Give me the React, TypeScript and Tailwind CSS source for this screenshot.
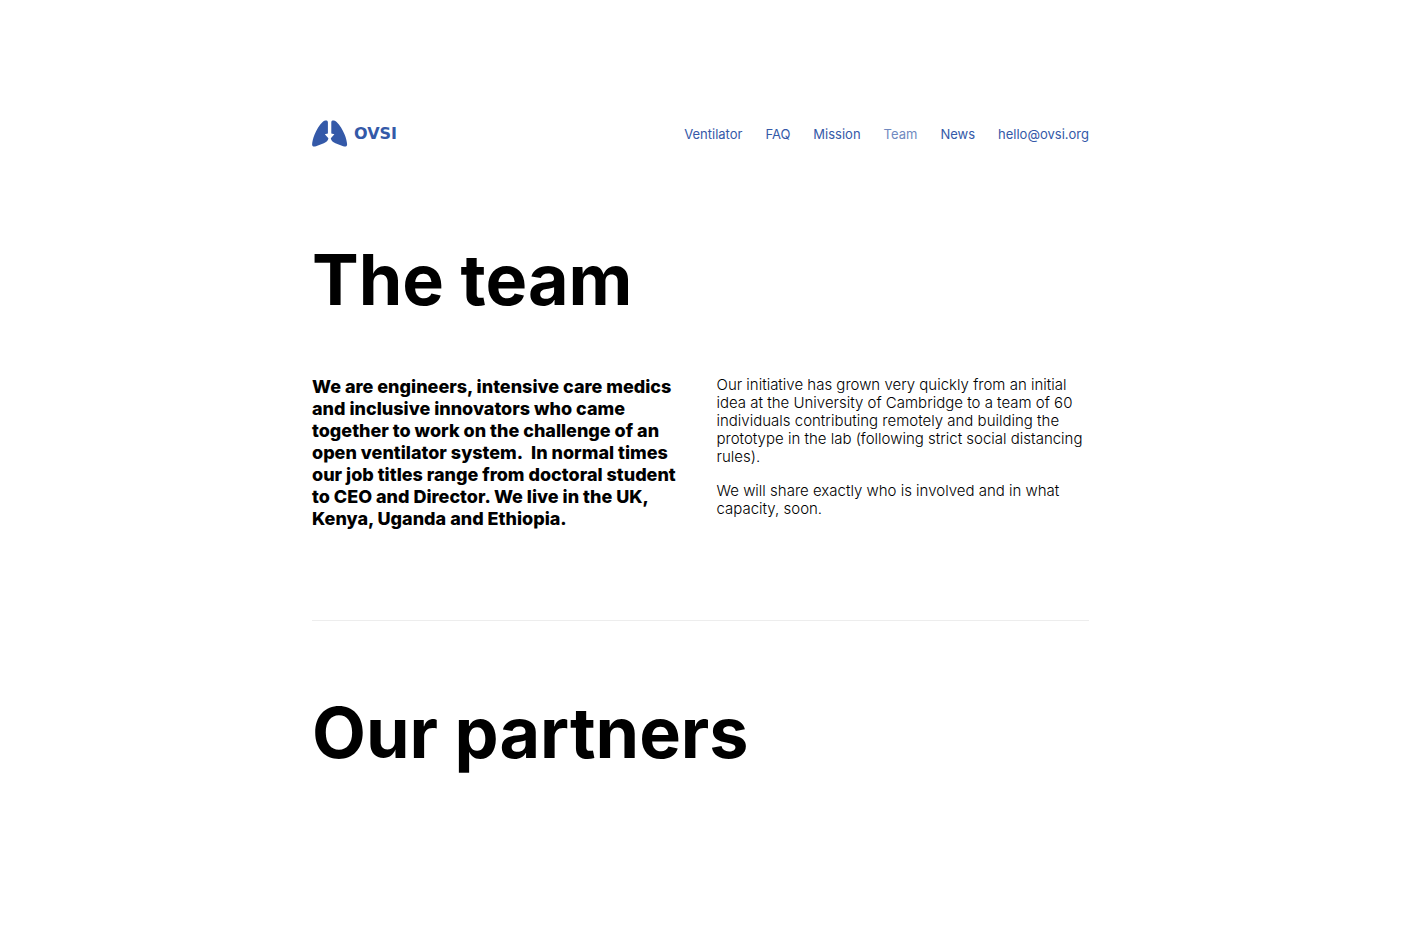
const links = [
  { label: "Ventilator", href: "#ventilator" },
  { label: "FAQ", href: "#faq" },
  { label: "Mission", href: "#mission" },
  { label: "Team", href: "#team", current: true },
  { label: "News", href: "#news" },
  { label: "hello@ovsi.org", href: "mailto:hello@ovsi.org" },
];

function Logo() {
  return (
    <a href="#home" className="flex items-center gap-1.5 text-[#3459a8]">
      <svg viewBox="0 0 36 27" className="h-[27px] w-9" fill="currentColor" aria-hidden="true">
        <path d="M10.6 2C12 .7 13.6.3 14.7.5 15.5.7 15.9 1.4 15.9 2.6V13.6L12.8 14.2 16.4 18.2C16.2 20.4 14.4 22.2 11.8 23.2L4 26.2C1.6 27 0 26.4.1 24.2.2 21.6 1.2 17.8 2.6 14.4 4.6 9.8 7.4 4.8 10.6 2Z" />
        <path d="M24.6 2C23.2.7 21.6.3 20.5.5 19.7.7 19.3 1.4 19.3 2.6V13.6L22.4 14.2 18.8 18.2C19 20.4 20.8 22.2 23.4 23.2L31.2 26.2C33.6 27 35.2 26.4 35.1 24.2 35 21.6 34 17.8 32.6 14.4 30.6 9.8 27.8 4.8 24.6 2Z" />
      </svg>
      <span className="font-['DejaVu_Sans',sans-serif] text-base leading-5 font-bold">OVSI</span>
    </a>
  );
}

export default function App() {
  return (
    <div className="min-h-screen bg-white px-6 pt-[120px] pb-16 font-['Inter',sans-serif] text-black">
      <div className="mx-auto max-w-[777px]">
        <header className="flex flex-wrap items-center justify-between gap-4">
          <Logo />
          <nav aria-label="Main" className="flex flex-wrap gap-x-[23px] gap-y-2 text-[13px] leading-5 text-[#3459a8]">
            {links.map((link) => (
              <a
                key={link.label}
                href={link.href}
                aria-current={link.current ? "page" : undefined}
                className={link.current ? "text-[#7089c0]" : "hover:underline"}
              >
                {link.label}
              </a>
            ))}
          </nav>
        </header>
        <main>
          <section className="border-b border-[#ededed] pt-[91px] pb-[90px]">
            <h1 className="text-[70px] leading-[84px] font-bold">The team</h1>
            <div className="mt-[54px] grid gap-8 md:grid-cols-2">
              <p className="text-lg leading-[22px] font-extrabold">
                We are engineers, intensive care medics and inclusive innovators who came together to work on the
                challenge of an open ventilator system.&nbsp; In normal times our job titles range from doctoral
                student to CEO and Director. We live in the UK, Kenya, Uganda and Ethiopia.
              </p>
              <div className="flex flex-col gap-4 text-[15px] leading-[18px] font-light">
                <p>
                  Our initiative has grown very quickly from an initial idea at the University of Cambridge to a team
                  of 60 individuals contributing remotely and building the prototype in the lab (following strict
                  social distancing rules).
                </p>
                <p>We will share exactly who is involved and in what capacity, soon.</p>
              </div>
            </div>
          </section>
          <section className="pt-[70px]">
            <h2 className="text-[70px] leading-[84px] font-bold">Our partners</h2>
          </section>
        </main>
      </div>
    </div>
  );
}
